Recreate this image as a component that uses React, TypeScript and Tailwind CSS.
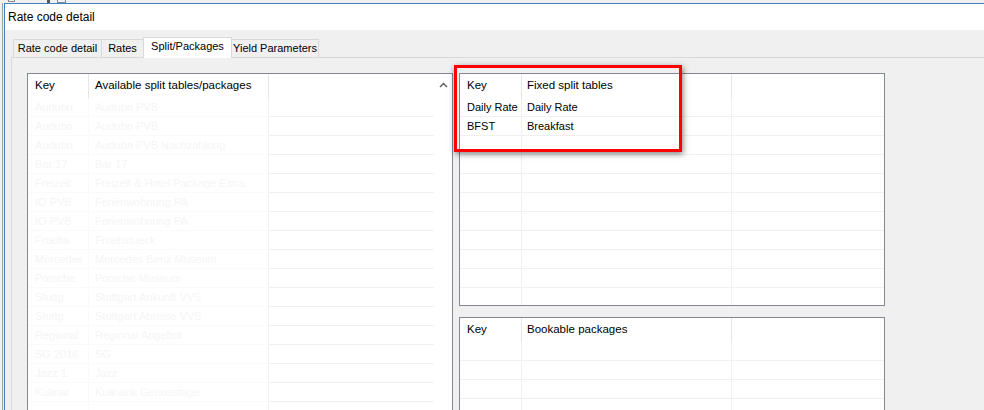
import React from "react";

const faded: [string, string][] = [
  ["Audubn", "Audubn PVB"],
  ["Audubn", "Audubn PVB"],
  ["Audubn", "Audubn PVB Nachzahlung"],
  ["Bar 17", "Bar 17"],
  ["Freizeit", "Freizeit & Hotel Package Extra"],
  ["IO PVB", "Ferienwohnung PA"],
  ["IO PVB", "Ferienwohnung PA"],
  ["Fruehs", "Fruehstueck"],
  ["Mercedes", "Mercedes Benz Museum"],
  ["Porsche", "Porsche Museum"],
  ["Stuttg", "Stuttgart Ankunft VVS"],
  ["Stuttg", "Stuttgart Abreise VVS"],
  ["Regional", "Regional Angebot"],
  ["SG 2016", "SG"],
  ["Jazz 1", "Jazz"],
  ["Kulinar", "Kulinarik Genusstage"],
  ["", ""],
];

function Tab({ label, w, selected, first }: { label: string; w: string; selected?: boolean; first?: boolean }) {
  return (
    <div
      className={
        (selected
          ? "h-[21px] bg-white relative z-10 -mb-px "
          : "h-[18px] bg-[#f0f0f0] ") +
        (first ? "" : "-ml-px ") +
        w +
        " border border-b-0 border-[#d9d9d9] flex items-center justify-center text-[11px] text-black leading-none"
      }
    >
      <span className={selected ? "-mt-[3px]" : ""}>{label}</span>
    </div>
  );
}

function LeftList() {
  return (
    <div className="w-[426px] h-[400px] border border-[#828790] bg-white flex shrink-0">
      <div className="w-[406px] flex flex-col">
        <div className="h-[24px] flex text-[11.5px] text-black shrink-0">
          <div className="w-[61px] border-r border-[#e5e5e5] pl-[7px] flex items-center">Key</div>
          <div className="w-[180px] border-r border-[#e5e5e5] pl-[6px] flex items-center whitespace-nowrap">
            Available split tables/packages
          </div>
          <div className="flex-1" />
        </div>
        {faded.map(([k, n], i) => (
          <div key={i} className="h-[19px] flex text-[11px] text-[#f5f5f5] shrink-0">
            <div className="w-[61px] border-b border-r border-[#fafafa] pl-[7px] flex items-center whitespace-nowrap overflow-hidden">
              {k}
            </div>
            <div className="w-[180px] border-b border-[#fafafa] border-r-[#f0f0f0] border-r pl-[6px] flex items-center whitespace-nowrap overflow-hidden">
              {n}
            </div>
            <div className="flex-1 border-b border-[#f0f0f0]" />
          </div>
        ))}
      </div>
      <div className="w-[18px] flex justify-center pt-[8px]">
        <svg width="9" height="6" viewBox="0 0 9 6">
          <path d="M1 5 L4.5 1.5 L8 5" fill="none" stroke="#606060" strokeWidth="1.5" />
        </svg>
      </div>
    </div>
  );
}

function RightList({ h, title, rows }: { h: string; title: string; rows: [string, string][] }) {
  const n = 12;
  const all: [string, string][] = [...rows];
  while (all.length < n) all.push(["", ""]);
  return (
    <div className={h + " w-[426px] border border-[#828790] bg-white flex flex-col overflow-hidden shrink-0"}>
      <div className="h-[24px] flex text-[11.5px] text-black shrink-0">
        <div className="w-[62px] border-r border-[#e5e5e5] pl-[7px] flex items-center">Key</div>
        <div className="w-[210px] border-r border-[#e5e5e5] pl-[5px] flex items-center">{title}</div>
        <div className="flex-1" />
      </div>
      {all.map(([k, v], i) => (
        <div key={i} className="h-[19px] flex text-[11px] text-black shrink-0">
          <div className="w-[62px] border-b border-r border-[#f0f0f0] pl-[7px] flex items-center whitespace-nowrap">
            {k}
          </div>
          <div className="w-[210px] border-b border-r border-[#f0f0f0] pl-[5px] flex items-center whitespace-nowrap">
            {v}
          </div>
          <div className="flex-1 border-b border-[#f0f0f0]" />
        </div>
      ))}
    </div>
  );
}

export default function App() {
  return (
    <div className="w-[984px] h-[410px] overflow-hidden bg-[#f0f0f0] relative font-['Liberation_Sans',Arial,sans-serif] text-black">
      <div className="h-[3px] relative">
        <div className="absolute left-[8px] top-0 w-[7px] h-[2px] border-b border-l border-r border-[#8a8a8a]" />
        <div className="absolute left-[47px] top-0 w-[3px] h-[3px] bg-[#555]" />
        <div className="absolute left-[57px] top-0 w-[9px] h-[3px] border-l border-r border-b border-[#7a8aa0]" />
      </div>
      <div className="flex h-[407px]">
        <div className="w-[4px] flex shrink-0">
          <div className="w-[2px]" />
          <div className="w-[1px] bg-[#a0a0a0]" />
        </div>
        <div className="flex-1 border-l border-t border-[#3c83c5] flex flex-col">
          <div className="h-[26px] bg-white flex items-center pl-[3px] text-[12px] shrink-0">Rate code detail</div>
          <div className="flex-1 pl-[6px] pt-[7px] flex flex-col">
            <div className="h-[20px] flex items-end pl-[2px]">
              <Tab label="Rate code detail" w="w-[89px]" first />
              <Tab label="Rates" w="w-[43px]" />
              <Tab label="Split/Packages" w="w-[89px]" selected />
              <Tab label="Yield Parameters" w="w-[88px]" />
            </div>
            <div className="flex-1 border-l border-t border-[#d9d9d9] pl-[15px] pt-[15px] flex gap-[6px] items-start">
              <LeftList />
              <div className="flex flex-col gap-[11px]">
                <RightList
                  h="h-[233px]"
                  title="Fixed split tables"
                  rows={[
                    ["Daily Rate", "Daily Rate"],
                    ["BFST", "Breakfast"],
                  ]}
                />
                <RightList h="h-[200px]" title="Bookable packages" rows={[]} />
              </div>
            </div>
          </div>
        </div>
      </div>
      <div className="absolute left-[454px] top-[65px] w-[228px] h-[87px] border-[3px] border-[#ff0000] shadow-[1px_2px_6px_rgba(0,0,0,0.5)]" />
    </div>
  );
}
